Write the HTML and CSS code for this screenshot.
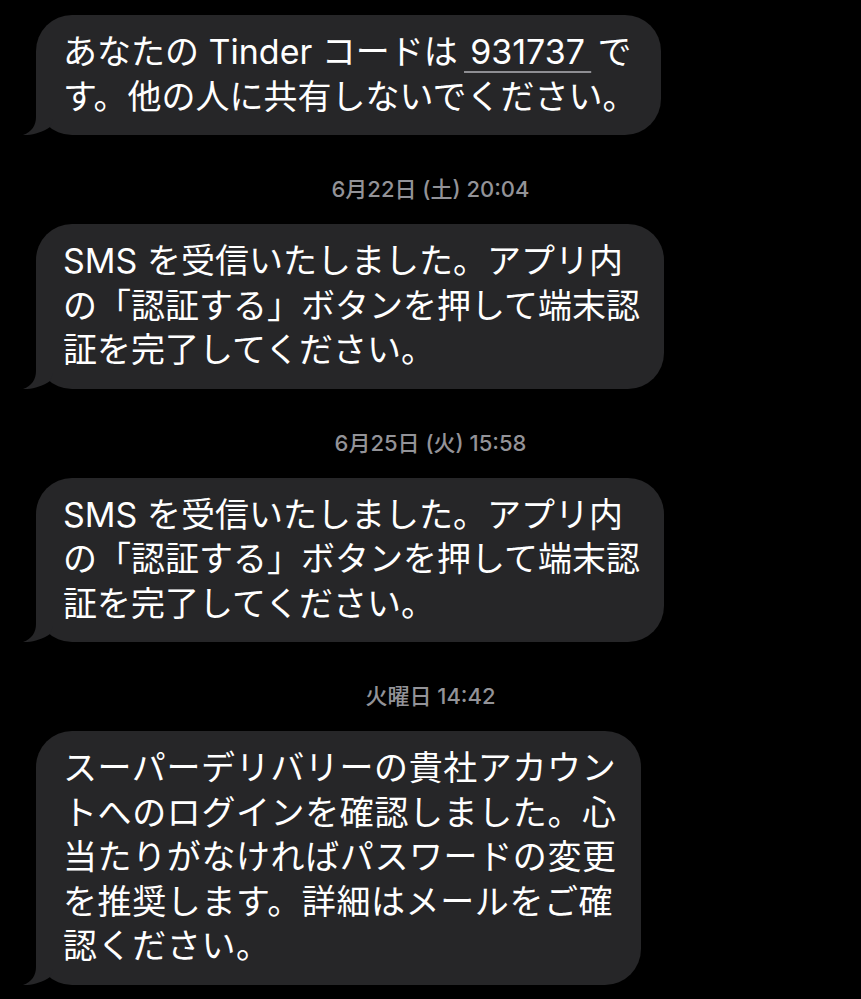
FILE: index.html
```html
<!DOCTYPE html>
<html lang="ja">
<head>
<meta charset="utf-8">
<title>Messages</title>
<link rel="stylesheet" href="styles.css">
</head>
<body>
<main class="thread">
  <div class="bubble">
    あなたの Tinder コードは&thinsp;<span class="code">&thinsp;931737&thinsp;</span>&thinsp;で<br>す。他の人に共有しないでください。
    <svg class="tail" viewBox="0 -10 30 40" width="30" height="40" aria-hidden="true"><path d="M13,-10 L13,12 C13,20 9,27 0,30 C8,30.6 19,27.6 27,22 L40,-10 Z"/></svg>
  </div>

  <div class="stamp">6月22日 (土) 20:04</div>

  <div class="bubble">
    SMS を受信いたしました。アプリ内<br>の「認証する」ボタンを押して端末認<br>証を完了してください。
    <svg class="tail" viewBox="0 -10 30 40" width="30" height="40" aria-hidden="true"><path d="M13,-10 L13,12 C13,20 9,27 0,30 C8,30.6 19,27.6 27,22 L40,-10 Z"/></svg>
  </div>

  <div class="stamp">6月25日 (火) 15:58</div>

  <div class="bubble">
    SMS を受信いたしました。アプリ内<br>の「認証する」ボタンを押して端末認<br>証を完了してください。
    <svg class="tail" viewBox="0 -10 30 40" width="30" height="40" aria-hidden="true"><path d="M13,-10 L13,12 C13,20 9,27 0,30 C8,30.6 19,27.6 27,22 L40,-10 Z"/></svg>
  </div>

  <div class="stamp">火曜日 14:42</div>

  <div class="bubble bubble-wide">
    スーパーデリバリーの貴社アカウン<br>トへのログインを確認しました。心<br>当たりがなければパスワードの変更<br>を推奨します。詳細はメールをご確<br>認ください。
    <svg class="tail" viewBox="0 -10 30 40" width="30" height="40" aria-hidden="true"><path d="M13,-10 L13,12 C13,20 9,27 0,30 C8,30.6 19,27.6 27,22 L40,-10 Z"/></svg>
  </div>
</main>
</body>
</html>
```

FILE: styles.css
```css
html, body {
  margin: 0;
  padding: 0;
  background: #000;
}

body {
  width: 861px;
  height: 999px;
  overflow: hidden;
  font-family: "Inter", "Noto Sans CJK JP", sans-serif;
}

.thread {
  display: flex;
  flex-direction: column;
  align-items: flex-start;
  padding: 15px 0 0 36px;
}

.bubble {
  position: relative;
  background: #262628;
  color: #fff;
  border-radius: 36px;
  padding: 15px 24px 16px 27px;
  font-size: 34px;
  line-height: 44.5px;
  white-space: nowrap;
}

.bubble-wide {
  letter-spacing: 0.6px;
}

.tail {
  position: absolute;
  left: -13px;
  bottom: 0;
  fill: #262628;
  display: block;
}

.code {
  text-decoration: underline;
  text-decoration-color: #8e8e93;
  text-decoration-thickness: 2px;
  text-underline-offset: 7px;
}

.stamp {
  align-self: stretch;
  margin: 42px 36px 23px 0;
  text-align: center;
  color: #939398;
  font-size: 22px;
  line-height: 24px;
  font-weight: 500;
}
```
